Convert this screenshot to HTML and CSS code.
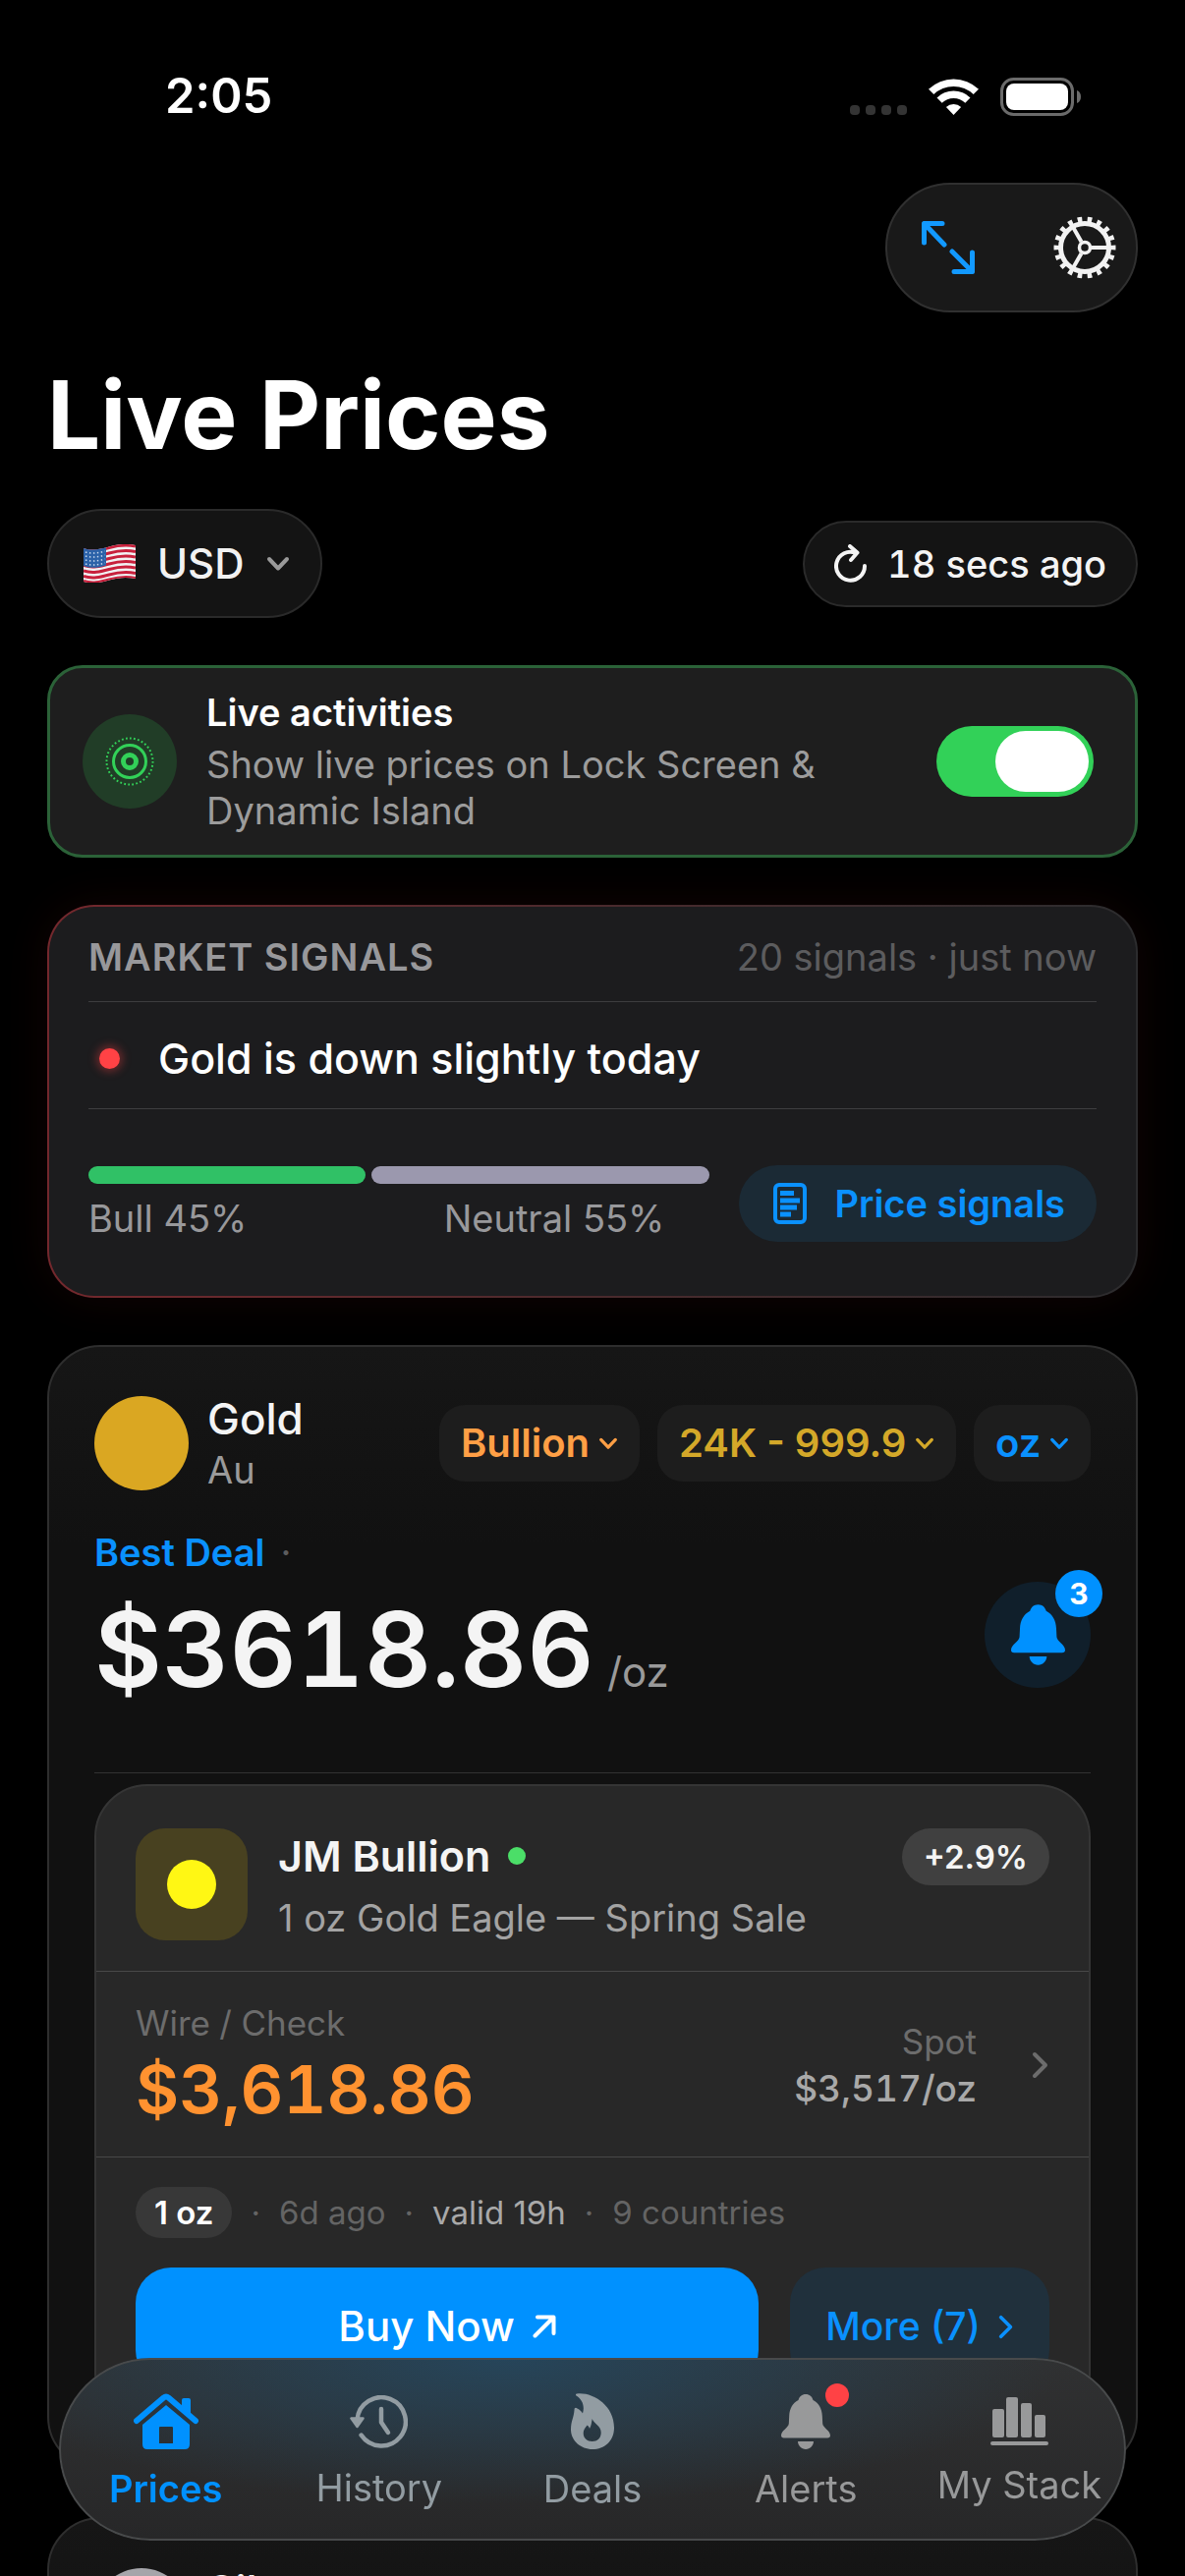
FILE: index.html
```html
<!DOCTYPE html>
<html lang="en">
<head>
  <meta charset="UTF-8" />
  <meta name="viewport" content="width=device-width, initial-scale=1.0" />
  <title>Live Prices</title>
  <link rel="stylesheet" href="styles.css">
</head>
<body>
  <svg class="sprite" aria-hidden="true">
    <symbol id="chevron-down" viewBox="0 0 24 16">
      <path d="M3 3l9 9.500 9-9.500" fill="none" stroke="currentColor" stroke-width="4" stroke-linecap="round" stroke-linejoin="round" />
    </symbol>
    <symbol id="chevron-right" viewBox="0 0 18 28">
      <path d="M3 3l11 11L3 25" fill="none" stroke="currentColor" stroke-width="4" stroke-linecap="round" stroke-linejoin="round" />
    </symbol>
    <symbol id="bell" viewBox="0 0 50 56">
      <path d="M25 0c4 0 6.500 2.500 7.500 6 6 3 9 9 9.300 16l.4 8c.3 4 7.800 7 7.800 12 0 1.500-1 2.500-2.800 2.500H2.800C1 44.500 0 43.500 0 42c0-5 7.500-8 7.800-12l.4-8c.3-7 3.300-13 9.300-16C18.500 2.500 21 0 25 0z" fill="currentColor" />
      <path d="M17 48h16c0 4-3.500 8-8 8s-8-4-8-8z" fill="currentColor" />
    </symbol>
  </svg>

  <div class="status-bar">
    <span class="time">2:05</span>
    <div class="status-icons">
      <svg width="58" height="37" viewBox="0 0 58 37" fill="#343434">
        <rect x="0" y="27" width="10" height="10" rx="4" />
        <rect x="16" y="27" width="10" height="10" rx="4" />
        <rect x="32" y="27" width="10" height="10" rx="4" />
        <rect x="48" y="27" width="10" height="10" rx="4" />
      </svg>
      <svg width="51" height="37" viewBox="0 0 51 37" fill="#fff">
        <path d="M0 10.800A37 37 0 0 1 51 10.800L45.700 16.100A29 29 0 0 0 5.300 16.100z" />
        <path d="M8.500 19.400A24.500 24.500 0 0 1 42.500 19.400L37.300 24.800A17 17 0 0 0 13.700 24.800z" />
        <path d="M17.900 29.100A11 11 0 0 1 33.100 29.100L25.500 37z" />
      </svg>
      <svg width="82" height="39" viewBox="0 0 82 39">
        <rect x="1.500" y="1.500" width="72" height="36" rx="12" fill="none" stroke="#6b6b6b" stroke-width="3" />
        <rect x="6" y="6" width="63" height="27" rx="8" fill="#fff" />
        <path d="M78 13c3 1 4 4 4 6.500s-1 5.500-4 6.500z" fill="#6b6b6b" />
      </svg>
    </div>
  </div>

  <main>
    <div class="toolbar">
      <button type="button" class="tool expand" aria-label="Expand">
        <svg width="54" height="54" viewBox="0 0 54 54" fill="none" stroke="currentColor" stroke-width="5" stroke-linecap="round" stroke-linejoin="round">
          <path d="M2.500 22V2.500H21M2.500 2.500L23 24M51.500 32v19.500H33M51.500 51.500L31 31" />
        </svg>
      </button>
      <button type="button" class="tool settings" aria-label="Settings">
        <svg width="64" height="64" viewBox="0 0 64 64" fill="none" stroke="currentColor">
          <circle cx="32" cy="32" r="28.500" stroke-width="6" pathLength="180" stroke-dasharray="4.600 5.400" stroke-dashoffset="2.300" />
          <circle cx="32" cy="32" r="24.500" stroke-width="5" />
          <circle cx="32" cy="32" r="5.500" stroke-width="3.500" />
          <path d="M39 32h16M28.500 26L20.500 12M28.500 38L20.500 52" stroke-width="4" />
        </svg>
      </button>
    </div>

    <h1>Live Prices</h1>

    <div class="filters">
      <label class="pill currency">
        <svg class="flag" width="53" height="39" viewBox="0 0 53 39">
          <defs>
            <clipPath id="wave"><path d="M0 4c9 3 17 1 26-1.500S43-1 53 1v34c-10-2-18-1-27 1.500S9 41 0 38z" /></clipPath>
          </defs>
          <g clip-path="url(#wave)">
            <rect width="53" height="39" fill="#f1f1f3" />
            <g fill="none" stroke="#c8203c" stroke-width="3">
              <path d="M0 5c9 3 17 1 26-1.500s17-3.500 27-1.500" />
              <path d="M0 10.500c9 3 17 1 26-1.500s17-3.500 27-1.500" />
              <path d="M0 16c9 3 17 1 26-1.500s17-3.500 27-1.500" />
              <path d="M0 21.500c9 3 17 1 26-1.500s17-3.500 27-1.500" />
              <path d="M0 27c9 3 17 1 26-1.500s17-3.500 27-1.500" />
              <path d="M0 32.500c9 3 17 1 26-1.500s17-3.500 27-1.500" />
              <path d="M0 37.500c9 3 17 1 26-1.500s17-3.500 27-1.500" />
            </g>
            <path d="M0 3c8 3 15 2 23-.5v19C15 24 8 25 0 22z" fill="#2b62a8" />
            <path d="M2 8c7 2 13 1 20-1M2 12c7 2 13 1 20-1M2 16c7 2 13 1 20-1M2 20c7 2 13 1 20-1" fill="none" stroke="#c9d9ee" stroke-width="1.500" stroke-dasharray="1.500 2.500" />
          </g>
        </svg>
        <select aria-label="Currency">
          <option>USD</option>
        </select>
        <svg width="24" height="16"><use href="#chevron-down" /></svg>
      </label>
      <button type="button" class="pill refresh">
        <svg width="34" height="40" viewBox="0 0 34 40" fill="none" stroke="currentColor" stroke-width="4" stroke-linecap="round" stroke-linejoin="round">
          <path d="M31 22A14.500 14.500 0 1 1 22 8.800" />
          <path d="M16 2l7.500 6.500L17 16" />
        </svg>
        18 secs ago
      </button>
    </div>

    <section class="live-card">
      <div class="live-icon">
        <svg width="50" height="50" viewBox="0 0 50 50" fill="none" stroke="#32d158">
          <circle cx="25" cy="25" r="23.500" stroke-width="2" pathLength="108" stroke-dasharray="1.300 1.700" />
          <circle cx="25" cy="25" r="16.500" stroke-width="3" />
          <circle cx="25" cy="25" r="6.500" stroke-width="5" />
        </svg>
      </div>
      <div class="live-text">
        <label for="liveToggle">Live activities</label>
        <p>Show live prices on Lock Screen &amp; Dynamic Island</p>
      </div>
      <input type="checkbox" id="liveToggle" class="toggle" checked />
    </section>

    <section class="signals">
      <div class="signals-head">
        <h2>MARKET SIGNALS</h2>
        <span>20 signals · just now</span>
      </div>
      <div class="signal-row">
        <span class="signal-dot"></span>
        Gold is down slightly today
      </div>
      <div class="sentiment">
        <div class="sentiment-chart">
          <div class="bars">
            <span class="bar bull" style="flex-grow: 45"></span>
            <span class="bar neutral" style="flex-grow: 55"></span>
          </div>
          <div class="bar-labels">
            <span>Bull 45%</span>
            <span>Neutral 55%</span>
          </div>
        </div>
        <button type="button" class="signals-button">
          <svg width="34" height="42" viewBox="0 0 34 42">
            <rect x="2" y="2" width="30" height="38" rx="4" fill="none" stroke="currentColor" stroke-width="4" />
            <path d="M7 10.500h14M7 18h20M7 25h17M7 32h11" stroke="currentColor" stroke-width="5" />
          </svg>
          Price signals
        </button>
      </div>
    </section>

    <section class="metal">
      <div class="metal-head">
        <span class="coin gold"></span>
        <div class="metal-name">
          <h2>Gold</h2>
          <span>Au</span>
        </div>
        <div class="chips">
          <label class="chip orange">
            <select aria-label="Type"><option>Bullion</option></select>
            <svg width="20" height="13"><use href="#chevron-down" /></svg>
          </label>
          <label class="chip yellow">
            <select aria-label="Purity"><option>24K - 999.9</option></select>
            <svg width="20" height="13"><use href="#chevron-down" /></svg>
          </label>
          <label class="chip blue">
            <select aria-label="Unit"><option>oz</option></select>
            <svg width="20" height="13"><use href="#chevron-down" /></svg>
          </label>
        </div>
      </div>

      <div class="best">
        <div>
          <p class="best-label"><a href="#">Best Deal</a><span>·</span></p>
          <p class="price">$3618.86<span>/oz</span></p>
        </div>
        <button type="button" class="alert-button" aria-label="Price alerts">
          <svg width="55" height="62"><use href="#bell" /></svg>
          <span class="badge">3</span>
        </button>
      </div>

      <div class="deal">
        <div class="deal-head">
          <span class="dealer-logo"></span>
          <div class="dealer">
            <h3>JM Bullion <span class="online"></span></h3>
            <p>1 oz Gold Eagle — Spring Sale</p>
          </div>
          <span class="premium">+2.9%</span>
        </div>
        <div class="deal-price">
          <div>
            <p class="muted">Wire / Check</p>
            <p class="amount">$3,618.86</p>
          </div>
          <div class="spot">
            <p class="muted">Spot</p>
            <p class="spot-value">$3,517/oz</p>
          </div>
          <svg width="18" height="28"><use href="#chevron-right" /></svg>
        </div>
        <div class="deal-foot">
          <div class="meta">
            <span class="weight">1 oz</span>
            <span>·</span>
            <span>6d ago</span>
            <span>·</span>
            <span class="valid">valid 19h</span>
            <span>·</span>
            <span>9 countries</span>
          </div>
          <div class="actions">
            <button type="button" class="buy">
              Buy Now
              <svg width="24" height="24" viewBox="0 0 24 24" fill="none" stroke="currentColor" stroke-width="4" stroke-linecap="round" stroke-linejoin="round">
                <path d="M2.500 21.500L21 3M5 2.500h16.500V19" />
              </svg>
            </button>
            <button type="button" class="more">
              More (7)
              <svg width="16" height="25"><use href="#chevron-right" /></svg>
            </button>
          </div>
        </div>
      </div>
    </section>

    <section class="metal">
      <div class="metal-head">
        <span class="coin silver"></span>
        <div class="metal-name">
          <h2>Silver</h2>
          <span>Ag</span>
        </div>
      </div>
    </section>
  </main>

  <nav class="tabs">
    <a href="#" class="tab active">
      <svg width="66" height="57" viewBox="0 0 66 57">
        <path d="M3 28L30.500 4.500q2.500-2 5 0L63 28" fill="none" stroke="currentColor" stroke-width="6" stroke-linecap="round" stroke-linejoin="round" />
        <path d="M49 15V7q0-2 2-2h5q2 0 2 2v16z" fill="currentColor" />
        <path fill-rule="evenodd" d="M33 12L57 32v20q0 5-5 5H14q-5 0-5-5V32zM26 35v16h14V35q0-1-1-1H27q-1 0-1 1z" fill="currentColor" />
      </svg>
      <span>Prices</span>
    </a>
    <a href="#" class="tab">
      <svg width="59" height="54" viewBox="0 0 59 54" fill="none" stroke="currentColor" stroke-width="4.500" stroke-linecap="round" stroke-linejoin="round">
        <path d="M11.600 40.600A24.700 24.700 0 1 0 7.500 25" />
        <path d="M32 14v13.500L39 38" />
        <path d="M1.500 23.500h12L7.500 32z" fill="currentColor" stroke-width="2.500" />
      </svg>
      <span>History</span>
    </a>
    <a href="#" class="tab">
      <svg width="44" height="57" viewBox="0 0 44 57">
        <path fill-rule="evenodd" d="M6 .5C22-1.500 44 12 44 35c0 14-10 22-22 22S0 48 0 37c0-9 3-12 3.500-20 0-2.500 1.500-3 3-1.500 2 1 4 2.500 5.500 5C14.500 12 11 6 5.500 2.500 4.500 1.500 5 .7 6 .5zM21.700 26c1.500 5 9 7 9 14 0 6-4 9-9 9s-9-3-9-8.500c0-3 1.500-5 4-8 1 1 2 2 2.300 3.500C21 33 21 29 21.700 26z" fill="currentColor" />
      </svg>
      <span>Deals</span>
    </a>
    <a href="#" class="tab alerts">
      <svg width="50" height="56"><use href="#bell" /></svg>
      <span>Alerts</span>
    </a>
    <a href="#" class="tab">
      <svg width="59" height="49" viewBox="0 0 59 49" fill="currentColor">
        <rect x="2" y="12" width="12" height="29" rx="2" />
        <rect x="16" y="0" width="12" height="41" rx="2" />
        <rect x="31" y="6" width="11" height="35" rx="2" />
        <rect x="45" y="18" width="11" height="23" rx="2" />
        <rect x="0" y="45" width="59" height="4" rx="2" />
      </svg>
      <span>My Stack</span>
    </a>
  </nav>
</body>
</html>
```

FILE: styles.css
```css
* {
  box-sizing: border-box;
}
body {
  margin: 0;
  height: 100vh;
  overflow: hidden;
  background: #000;
  color: #f4f4f4;
  font-family: Inter, "Liberation Sans", sans-serif;
  font-size: 38px;
  line-height: 46px;
}
h1, h2, h3, p {
  margin: 0;
  font-weight: 600;
}
p {
  font-weight: 400;
}
svg {
  display: block;
  flex-shrink: 0;
}
.sprite {
  position: absolute;
  width: 0;
  height: 0;
}
button, select {
  appearance: none;
  border: none;
  padding: 0;
  background: none;
  color: inherit;
  font: inherit;
  cursor: pointer;
}
a {
  color: inherit;
  text-decoration: none;
}

/* Status bar */
.status-bar {
  display: flex;
  justify-content: space-between;
  align-items: center;
  padding: 66px 106px 0 168px;
}
.time {
  font-size: 49px;
  line-height: 64px;
  font-weight: 600;
  color: #fff;
}
.status-icons {
  display: flex;
  align-items: center;
  gap: 22px;
}

main {
  padding: 56px 48px 0;
}

/* Toolbar and filters */
.toolbar {
  display: flex;
  justify-content: space-between;
  align-items: center;
  width: 257px;
  height: 132px;
  margin-left: auto;
  padding: 0 20px 0 35px;
  border: 2px solid #303030;
  border-radius: 66px;
  background: #191919;
}
.tool {
  color: #f2f2f2;
}
.expand {
  color: #1299ff;
}
h1 {
  margin-top: 44px;
  font-size: 96px;
  line-height: 120px;
  font-weight: 700;
  color: #fff;
}
.filters {
  display: flex;
  justify-content: space-between;
  align-items: center;
  margin-top: 36px;
}
.pill {
  display: flex;
  align-items: center;
  border: 2px solid #2a2a2a;
  border-radius: 56px;
  background: #141414;
  font-weight: 500;
}
.currency {
  height: 111px;
  padding: 0 31px 0 35px;
  gap: 22px;
  font-size: 42px;
  color: #f2f2f2;
}
.currency svg:last-child {
  color: #9a9a9a;
}
.refresh {
  height: 88px;
  padding: 0 30px;
  gap: 20px;
  font-variant-numeric: tabular-nums;
}

/* Live activities */
.live-card {
  display: flex;
  align-items: center;
  margin-top: 48px;
  height: 196px;
  padding: 0 42px 0 33px;
  border: 3px solid #2b6238;
  border-radius: 36px;
  background: #1e1e1e;
}
.live-icon {
  display: flex;
  align-items: center;
  justify-content: center;
  width: 96px;
  height: 96px;
  border-radius: 50%;
  background: #213d27;
  flex-shrink: 0;
}
.live-text {
  flex: 1;
  padding: 0 100px 0 30px;
  line-height: 47px;
}
.live-text label {
  display: block;
  margin-bottom: 6px;
  font-weight: 600;
  color: #fff;
}
.live-text p {
  color: #9c9c9c;
}
.toggle {
  appearance: none;
  width: 160px;
  height: 72px;
  margin: 0;
  padding: 5px;
  border-radius: 36px;
  background: #32d158;
  display: flex;
  justify-content: flex-end;
  flex-shrink: 0;
}
.toggle::before {
  content: "";
  width: 95px;
  height: 62px;
  border-radius: 31px;
  background: #fff;
}
.toggle:not(:checked) {
  justify-content: flex-start;
  background: #39393d;
}

/* Market signals */
.signals {
  margin-top: 48px;
  padding: 0 40px;
  border: 2px solid transparent;
  border-radius: 48px;
  background:
    linear-gradient(#1c1c1e, #1c1c1e) padding-box,
    linear-gradient(90deg, #74282d, #4b2a2d 50%, #2c2c2e) border-box;
  box-shadow: 0 0 48px rgba(255, 59, 48, 0.07);
}
.signals-head {
  display: flex;
  justify-content: space-between;
  padding: 28px 0 22px;
  color: #5c5c5e;
}
.signals-head h2 {
  font-size: 38px;
  line-height: 46px;
  font-weight: 600;
  letter-spacing: 1px;
  color: #98989b;
}
.signal-row {
  display: flex;
  align-items: center;
  gap: 39px;
  padding: 32px 0 26px 11px;
  border-top: 1px solid #3d3d3f;
  border-bottom: 1px solid #3d3d3f;
  font-size: 43px;
  line-height: 50px;
  font-weight: 500;
  color: #fff;
}
.signal-dot {
  width: 21px;
  height: 21px;
  border-radius: 50%;
  background: #ff4245;
  box-shadow: 0 0 8px 3px rgba(255, 66, 69, 0.35);
}
.sentiment {
  display: flex;
  align-items: center;
  gap: 30px;
  padding: 57px 0 55px;
}
.sentiment-chart {
  flex: 1;
}
.bars {
  display: flex;
  gap: 6px;
  margin-bottom: 12px;
}
.bar {
  flex-basis: 0;
  height: 18px;
  border-radius: 9px;
}
.bull {
  background: #30c166;
}
.neutral {
  background: #9b98ae;
}
.bar-labels {
  display: flex;
  justify-content: space-between;
  padding-right: 46px;
  color: #98989b;
}
.signals-button {
  display: flex;
  align-items: center;
  gap: 28px;
  height: 78px;
  padding: 0 32px 0 35px;
  border-radius: 39px;
  background: #1b2a35;
  color: #0a91ff;
  font-weight: 600;
}

/* Metal card */
.metal {
  margin-top: 48px;
  padding: 46px 46px 42px;
  border: 2px solid #2e2e2e;
  border-radius: 54px;
  background: linear-gradient(#161616, #111 200px);
}
.metal-head {
  display: flex;
  align-items: center;
}
.coin {
  width: 96px;
  height: 96px;
  border-radius: 50%;
}
.gold {
  background: #daa722;
}
.silver {
  background: #a5a5aa;
}
.metal-name {
  margin-left: 19px;
  line-height: 50px;
  color: #9a9a9a;
}
.metal-name h2 {
  font-size: 44px;
  line-height: 54px;
  font-weight: 500;
  color: #f4f4f4;
}
.chips {
  display: flex;
  gap: 18px;
  margin-left: auto;
}
.chip {
  display: flex;
  align-items: center;
  gap: 8px;
  height: 78px;
  padding: 0 22px;
  border-radius: 26px;
  background: #1d1d1d;
  font-size: 40px;
  font-weight: 600;
}
.orange {
  color: #ff9f45;
}
.yellow {
  color: #d4a829;
}
.blue {
  color: #0a91ff;
}
.best {
  display: flex;
  justify-content: space-between;
  align-items: flex-end;
  margin-top: 36px;
  padding-bottom: 65px;
  border-bottom: 1px solid #323232;
}
.best-label {
  display: flex;
  gap: 16px;
  color: #5c5c5e;
}
.best-label a {
  font-weight: 600;
  color: #0a91ff;
}
.price {
  display: flex;
  align-items: baseline;
  gap: 13px;
  margin-top: 16px;
  font-size: 106px;
  line-height: 120px;
  font-weight: 600;
  font-variant-numeric: tabular-nums;
}
.price span {
  font-size: 42px;
  line-height: 46px;
  font-weight: 400;
  color: #9a9a9a;
}
.alert-button {
  position: relative;
  display: flex;
  align-items: center;
  justify-content: center;
  width: 108px;
  height: 108px;
  margin-bottom: 21px;
  border-radius: 50%;
  background: #101f2b;
  color: #0091ff;
}
.badge {
  position: absolute;
  top: -12px;
  right: -12px;
  width: 48px;
  height: 48px;
  border-radius: 50%;
  background: #0091ff;
  color: #fff;
  font-size: 30px;
  line-height: 48px;
  font-weight: 700;
}

/* Deal */
.deal {
  margin-top: 11px;
  border: 2px solid #353535;
  border-radius: 54px;
  background: #282828;
}
.deal-head {
  display: flex;
  align-items: flex-start;
  padding: 43px 40px 31px;
}
.dealer-logo {
  display: flex;
  align-items: center;
  justify-content: center;
  width: 114px;
  height: 114px;
  border-radius: 30px;
  background: #484120;
}
.dealer-logo::before {
  content: "";
  width: 50px;
  height: 50px;
  border-radius: 50%;
  background: #fff714;
}
.dealer {
  flex: 1;
  margin-left: 31px;
  color: #a3a3a3;
}
.dealer h3 {
  display: flex;
  align-items: center;
  gap: 18px;
  margin-bottom: 12px;
  font-size: 43px;
  line-height: 56px;
  font-weight: 600;
  color: #f4f4f4;
}
.online {
  width: 18px;
  height: 18px;
  border-radius: 50%;
  background: #4bde68;
}
.premium {
  padding: 0 22px;
  border-radius: 29px;
  background: #404040;
  color: #f4f4f4;
  font-size: 33px;
  line-height: 58px;
  font-weight: 600;
}
.deal-price {
  display: flex;
  align-items: center;
  padding: 31px 40px 29px;
  border-top: 1px solid #484848;
  border-bottom: 1px solid #484848;
  color: #6c6c6c;
  font-variant-numeric: tabular-nums;
}
.muted {
  font-size: 35px;
  line-height: 42px;
}
.amount {
  margin-top: 6px;
  font-size: 68px;
  line-height: 80px;
  font-weight: 600;
  color: #ff9230;
}
.spot {
  margin-left: auto;
  margin-right: 56px;
  text-align: right;
}
.spot-value {
  margin-top: 6px;
  font-size: 37px;
  line-height: 42px;
  font-weight: 500;
  color: #a9a9a9;
}
.deal-foot {
  padding: 30px 40px 40px;
}
.meta {
  display: flex;
  align-items: center;
  gap: 19px;
  font-size: 33px;
  line-height: 52px;
  color: #646464;
}
.weight {
  padding: 0 19px;
  border-radius: 26px;
  background: #383838;
  color: #fff;
  font-weight: 600;
}
.valid {
  color: #a9a9a9;
}
.actions {
  display: flex;
  gap: 32px;
  margin-top: 30px;
}
.buy, .more {
  display: flex;
  align-items: center;
  justify-content: center;
  gap: 18px;
  height: 120px;
  border-radius: 36px;
  font-weight: 500;
}
.buy {
  flex: 1;
  background: #0091ff;
  color: #fff;
  font-size: 42px;
}
.more {
  padding: 0 36px;
  background: #20303c;
  color: #0a91ff;
  font-size: 39px;
}

/* Tab bar */
.tabs {
  position: fixed;
  left: 60px;
  right: 60px;
  bottom: 36px;
  height: 186px;
  display: grid;
  grid-template-columns: repeat(5, 1fr);
  padding-top: 6px;
  border-radius: 93px;
  background:
    radial-gradient(ellipse 52% 80% at 42% 0, #26455a, rgba(38, 69, 90, 0.5) 50%, rgba(38, 69, 90, 0)),
    linear-gradient(#303132, #272728);
  box-shadow: inset 0 0 0 2px #484a4b;
}
.tab {
  display: flex;
  flex-direction: column;
  align-items: center;
  justify-content: center;
  gap: 17px;
  color: #98999a;
}
.tab:nth-child(2), .tab:nth-child(3) {
  color: #929ca2;
}
.tab span {
  white-space: nowrap;
}
.tab.active {
  color: #0091ff;
  font-weight: 600;
}
.alerts {
  position: relative;
}
.alerts::after {
  content: "";
  position: absolute;
  top: 20px;
  left: 128px;
  width: 24px;
  height: 24px;
  border-radius: 50%;
  background: #ff4245;
}
```
